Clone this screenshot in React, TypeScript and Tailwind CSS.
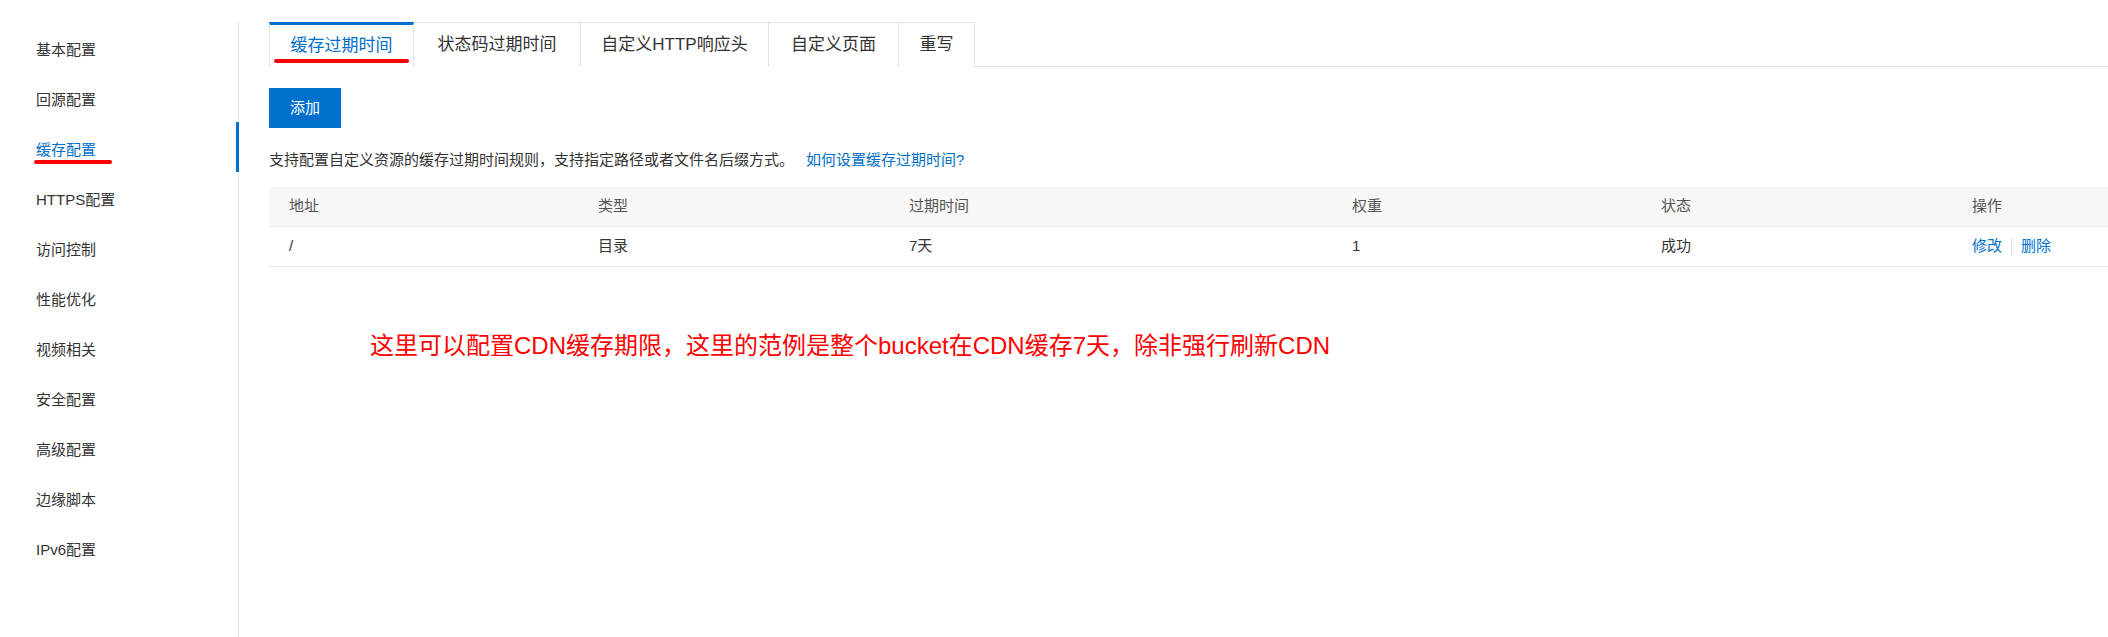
const menuItems = [
  '基本配置',
  '回源配置',
  '缓存配置',
  'HTTPS配置',
  '访问控制',
  '性能优化',
  '视频相关',
  '安全配置',
  '高级配置',
  '边缘脚本',
  'IPv6配置',
]

const tabs = [
  { label: '缓存过期时间', width: 'w-[145px]' },
  { label: '状态码过期时间', width: 'w-[167px]' },
  { label: '自定义HTTP响应头', width: 'w-[188px]' },
  { label: '自定义页面', width: 'w-[130px]' },
  { label: '重写', width: 'w-[76px]' },
]

const columns = ['地址', '类型', '过期时间', '权重', '状态', '操作']

const rows = [{ path: '/', type: '目录', ttl: '7天', weight: '1', status: '成功' }]

function App() {
  const activeMenu = '缓存配置'
  const activeTab = '缓存过期时间'

  return (
    <div className="flex h-[637px] w-[2108px] overflow-hidden bg-white font-['Liberation_Sans','Noto_Sans_CJK_SC',sans-serif] text-[#333]">
      <aside className="flex w-[239px] shrink-0 flex-col pt-[22px]">
        <nav className="flex flex-1 flex-col border-r border-[#e3e3e3]">
          {menuItems.map((item) => {
            const isActive = item === activeMenu
            return (
              <div
                key={item}
                className={`relative flex h-[50px] items-center pl-[36px] pt-[6px] text-[15px] ${
                  isActive ? 'text-[#0070cc]' : 'text-[#333]'
                }`}
              >
                {item}
                {isActive ? (
                  <>
                    <span className="absolute right-[-1px] top-0 h-full w-[3px] bg-[#0070cc]" />
                    <span className="absolute left-[34px] top-[38px] h-[4px] w-[78px] rounded-full bg-[#ff0000]" />
                  </>
                ) : null}
              </div>
            )
          })}
        </nav>
      </aside>

      <main className="flex flex-1 flex-col pl-[30px] pt-[22px]">
        <div className="flex border-b border-[#e3e3e3]">
          {tabs.map((tab, index) => {
            const isActive = tab.label === activeTab
            return (
              <div
                key={tab.label}
                className={`relative -mb-px flex h-[45px] items-center justify-center bg-white text-[17px] ${tab.width} ${
                  isActive
                    ? 'border-x border-t-[3px] border-b border-x-[#e3e3e3] border-t-[#0070cc] border-b-white text-[#0070cc]'
                    : `border-t border-r border-[#e3e3e3] text-[#333] ${index === 0 ? 'border-l' : ''}`
                }`}
              >
                {tab.label}
                {isActive ? (
                  <span className="absolute bottom-[3px] left-[4px] h-[4px] w-[135px] rounded-full bg-[#ff0000]" />
                ) : null}
              </div>
            )
          })}
        </div>

        <div className="mt-[21px]">
          <button
            type="button"
            className="h-[40px] w-[72px] bg-[#0070cc] text-[15px] text-white"
          >
            添加
          </button>
        </div>

        <p className="mt-[22px] flex h-[20px] items-center text-[15px] text-[#333]">
          支持配置自定义资源的缓存过期时间规则，支持指定路径或者文件名后缀方式。
          <span className="ml-[12px] text-[#0070cc]">如何设置缓存过期时间?</span>
        </p>

        <div className="mt-[17px] text-[15px]">
          <div className="grid h-[40px] grid-cols-[309px_311px_443px_309px_311px_1fr] items-center border-b border-[#e8e8e8] bg-[#f7f7f7] text-[#555]">
            {columns.map((column) => (
              <div key={column} className="px-5">
                {column}
              </div>
            ))}
          </div>
          {rows.map((row) => (
            <div
              key={row.path}
              className="grid h-[40px] grid-cols-[309px_311px_443px_309px_311px_1fr] items-center border-b border-[#e8e8e8] text-[#333]"
            >
              <div className="px-5">{row.path}</div>
              <div className="px-5">{row.type}</div>
              <div className="px-5">{row.ttl}</div>
              <div className="px-5">{row.weight}</div>
              <div className="px-5">{row.status}</div>
              <div className="flex items-center px-5 text-[#0070cc]">
                <span>修改</span>
                <span className="mx-[9px] h-[18px] w-px bg-[#ddd]" />
                <span>删除</span>
              </div>
            </div>
          ))}
        </div>

        <p className="mt-[61px] pl-[101px] text-[24px] leading-[36px] text-[#ff0000]">
          这里可以配置CDN缓存期限，这里的范例是整个bucket在CDN缓存7天，除非强行刷新CDN
        </p>
      </main>
    </div>
  )
}

export default App
